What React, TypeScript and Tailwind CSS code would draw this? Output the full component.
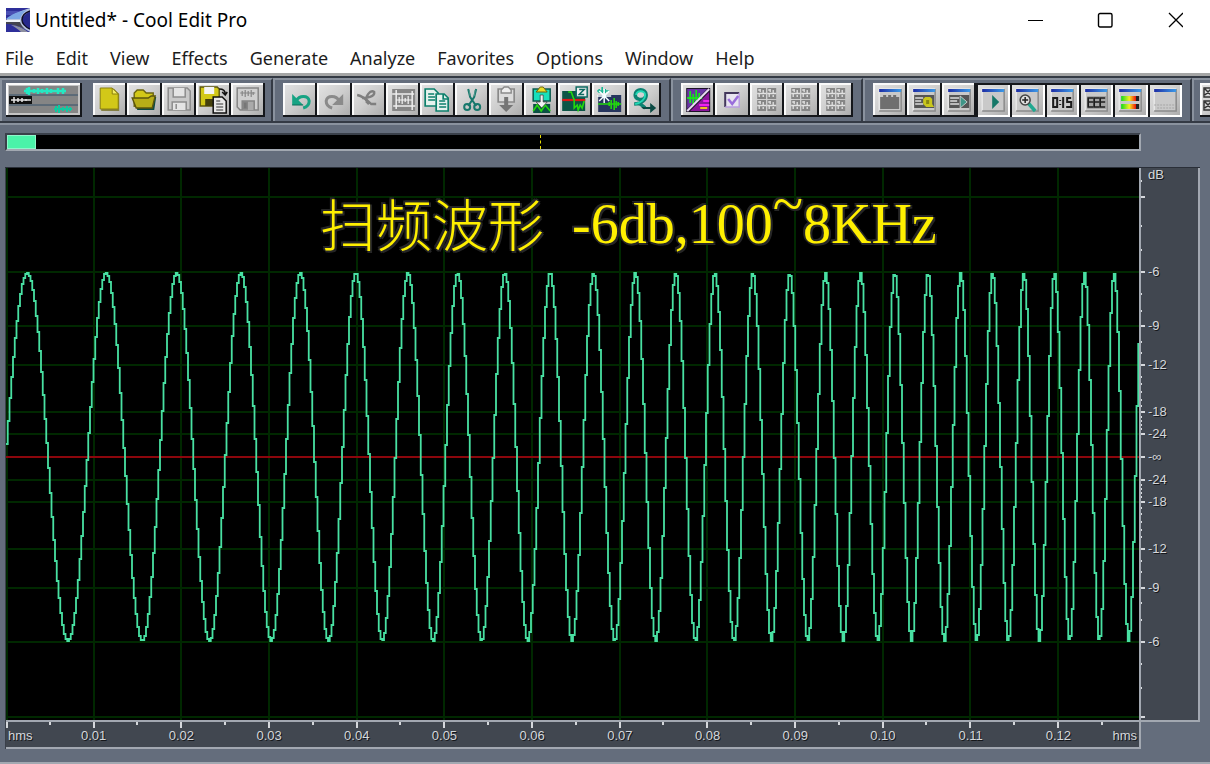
import React from "react";

const MENUS = ["File", "Edit", "View", "Effects", "Generate", "Analyze", "Favorites", "Options", "Window", "Help"];
const TIMES = ["0.01", "0.02", "0.03", "0.04", "0.05", "0.06", "0.07", "0.08", "0.09", "0.10", "0.11", "0.12"];

const PLOT_W = 1133;
const PLOT_H = 552;
const MID = 289;
const AMP = 184;
const STEP_X = 87.65;

const LEVELS = [
  { off: 23, label: "-24" },
  { off: 45, label: "-18" },
  { off: 92, label: "-12" },
  { off: 131, label: "-9" },
  { off: 185, label: "-6" },
  { off: 260, label: "" },
];
const MINOR = [28, 32, 36, 40, 51, 57, 65, 73, 80, 104, 115, 146, 163, 207, 231, 276];

function sweepPath() {
  const dx = 1.75;
  let d = "";
  for (let x = 0; x < PLOT_W; x += dx) {
    const t = x + 1;
    const cycles = 0.011405 * t + 0.000010263 * t * t;
    const y = Math.round(MID - AMP * Math.sin(2 * Math.PI * cycles));
    d += d === "" ? `M${x} ${y}` : `V${y}`;
    d += `H${x + dx}`;
  }
  return d;
}
const WAVE = sweepPath();

/* ---------- toolbar icons, drawn on a 34 x 34 face ---------- */

const NewIcon = (
  <g>
    <path d="M8 6h13l5 5v17H8z" fill="#6b6410" opacity=".7" />
    <path d="M7 5h12l6 6v15H7z" fill="#d2c818" stroke="#8a8010" />
    <path d="M19 5v6h6z" fill="#f4ec60" stroke="#8a8010" />
  </g>
);
const OpenIcon = (
  <g>
    <path d="M8 14h21l-2 13H10z" fill="#0d4a44" />
    <path d="M7 24V10l3-3h6l3 3h7v4" fill="#d2c818" stroke="#6b6410" strokeWidth="1.4" />
    <path d="M5 15h16l3-2h4l-3 12H9z" fill="#b8ae18" stroke="#5c560c" strokeWidth="1.4" />
  </g>
);
const SaveIcon = (
  <g fill="none" stroke="#8d8d8d" strokeWidth="1.5">
    <path d="M6 5h19l3 3v19H6z" fill="#c9c9c9" />
    <path d="M11 5v9h12V5M10 27v-8h14v8M14 21v5" fill="#e4e4e4" />
  </g>
);
const SaveAsIcon = (
  <g>
    <path d="M4 4h17l2 2v17H4z" fill="#d2c818" stroke="#5c560c" strokeWidth="1.4" />
    <path d="M8 4h10v7H8z" fill="#f4f4f4" />
    <path d="M9 16h9v7H9z" fill="#44400c" />
    <path d="M23 6c4 0 6 1 6 5M26 9l3 3 2-3" fill="none" stroke="#111" strokeWidth="1.6" />
    <path d="M17 14h9l4 4v12H17z" fill="#e8e8e8" stroke="#111" strokeWidth="1.5" />
    <path d="M20 18h4M20 21h7M20 24h7M20 27h7" stroke="#333" />
  </g>
);
const SaveSelIcon = (
  <g fill="none" stroke="#858585" strokeWidth="1.5">
    <path d="M6 5h21v22H9l-3-3z" fill="#cfcfcf" />
    <path d="M9 10h15M11 8v5M14 7v7M17 8v5M20 7v7M22 9v3" strokeWidth="1.2" />
    <path d="M11 27v-9h12v9" fill="#aaa" />
    <path d="M12 19h4v7h-4z" fill="#777" />
  </g>
);
const UndoIcon = (
  <g>
    <path d="M13 18c3-6 12-6 13 0 0 4-2 6-6 7" fill="none" stroke="#16a383" strokeWidth="3" />
    <path d="M9 11v11h11z" fill="#16a383" />
    <path d="M9 22h11" stroke="#0c6a58" />
  </g>
);
const RedoIcon = (
  <g>
    <path d="M22 18c-3-6-12-6-13 0 0 4 2 6 6 7" fill="none" stroke="#8a8a8a" strokeWidth="3" />
    <path d="M26 11v11H15z" fill="#8a8a8a" />
  </g>
);
const ToolIcon = (
  <g fill="none" stroke="#7f7f7f" strokeWidth="2.4">
    <path d="M5 12c5 1 9 4 14 9h5" />
    <path d="M10 15c4 0 13-1 12-6-4-3-9 5-8 9" />
    <path d="M14 18l3 3" strokeWidth="3" />
  </g>
);
const CropIcon = (
  <g>
    <path d="M6 6h23v22H6z" fill="#868686" />
    <path d="M10 7v19M26 8v19M6 11h22M7 23h22" stroke="#eee" strokeWidth="1.5" />
    <path d="M10 17h16M13 14v6M16 12v9M19 15v4M22 13v8" stroke="#f4f4f4" strokeWidth="1.2" />
  </g>
);
const CopyIcon = (
  <g stroke="#0c806c" strokeWidth="1.7" fill="#e6f3ee">
    <path d="M5 6h9l4 4v13H5z" />
    <path d="M8 11h6M8 14h7M8 17h7" />
    <path d="M16 11h8l4 4v13H16z" />
    <path d="M23 11v5h5M19 18h6M19 21h7M19 24h7" fill="none" />
  </g>
);
const CutIcon = (
  <g fill="none" stroke="#17786c" strokeWidth="2">
    <path d="M13 6l2 8 6 9M21 6l-2 8-6 9" />
    <circle cx="12" cy="24" r="3" />
    <circle cx="22" cy="24" r="3" />
    <path d="M14 7l1 6M20 7l-1 6" stroke="#50998e" strokeWidth="1" />
  </g>
);
const PasteIcon = (
  <g>
    <path d="M9 6h16v13H9z" fill="#dcdcdc" stroke="#8a8a8a" strokeWidth="1.7" />
    <path d="M12 10V7l3-3h4l3 3v3z" fill="#eee" stroke="#8a8a8a" strokeWidth="1.4" />
    <path d="M15 14h4v8h5l-7 7-7-7h5z" fill="#757575" />
  </g>
);
const MixPasteIcon = (
  <g>
    <path d="M9 6h17v12H9z" fill="#18e0bb" stroke="#0c5a4e" strokeWidth="1.5" />
    <path d="M12 9l4-5h3l4 5z" fill="#e9dd28" stroke="#6b6410" />
    <path d="M9 21h17v9H9z" fill="#0b5144" />
    <path d="M9 28l4-6 4 6 4-6 5 6" fill="none" stroke="#23d80e" strokeWidth="1.6" />
    <path d="M16 12h3v7h4l-5.500 6-5.500-6h4z" fill="#f2f2f2" stroke="#333" strokeWidth=".7" />
  </g>
);
const ZeroIcon = (
  <g>
    <path d="M4 8h23v20H4z" fill="#0c5546" />
    <path d="M4 17h23" stroke="#e01515" strokeWidth="2.200" />
    <path d="M10 9h3l3 8v8l3-3 1 5 2-5 2 3 2-7" fill="none" stroke="#23d80e" strokeWidth="1.600" />
    <path d="M18 4h11v10H18z" fill="#eee" stroke="#0c6a62" strokeWidth="1.5" />
    <path d="M21 6.500h5l-5 5h5" fill="none" stroke="#0c6a62" strokeWidth="1.500" />
  </g>
);
const NoiseIcon = (
  <g>
    <path d="M6 12h23v17H6z" fill="#26355e" />
    <path d="M6 21h23M17 19v4M19 17v9M22 15v12M24 18v7M26 19v4" stroke="#23d80e" strokeWidth="1.600" />
    <path d="M5 8h12M7 6v4M10 4v6M13 6v4" stroke="#16b893" strokeWidth="1.600" />
    <path d="M12 6v14M5 13h14M7 8l10 10M17 8L7 18" stroke="#f4ffff" strokeWidth="1.500" />
  </g>
);
const ConvertIcon = (
  <g>
    <path d="M7 21c8 0 12-5 12-9 0-7-11-7-11 0 0 5 8 6 10 2M9 21c4-2 6 2 9 4" fill="none" stroke="#0c8272" strokeWidth="3.500" />
    <path d="M8 21c6-1 10-5 10-9 0-5-9-5-9 0" fill="none" stroke="#22d8b5" strokeWidth="2" />
    <path d="M14 24h9v-4l6 5-6 5v-4h-7z" fill="#0b4a44" />
  </g>
);
const SpectralIcon = (
  <g>
    <path d="M5 5h24v24H5z" fill="#1c1226" />
    <path d="M6 6h20L6 26z" fill="#6a35a5" />
    <path d="M28 9v19H9z" fill="#8b159b" />
    <path d="M6 15h15M9 8v12M12 11v10M15 7v12M18 10v7" stroke="#18e41e" strokeWidth="1.800" />
    <path d="M6 28L28 6" stroke="#e8d9f4" strokeWidth="2" />
    <path d="M22 18h6M18 22h10" stroke="#ee22ee" strokeWidth="2" />
    <path d="M19 25h7" stroke="#f0c020" strokeWidth="2" />
  </g>
);
const CheckIcon = (
  <g>
    <path d="M10 10h14v14H10z" fill="#e8e4f0" />
    <path d="M10 24V10h14" fill="none" stroke="#43375c" strokeWidth="2" />
    <path d="M10 24h14V10" fill="none" stroke="#b99de0" strokeWidth="1.500" />
    <path d="M13 16l4 5 6-8" fill="none" stroke="#9a6ddb" strokeWidth="2.500" />
  </g>
);
const GridIcon = (
  <g>
    {[5, 17].map((y) =>
      [7, 17].map((x) => (
        <g key={`${x}-${y}`}>
          <path d={`M${x} ${y}h9v11h-9z`} fill="#868686" />
          <path
            d={`M${x} ${y + 5.5}h9M${x + 3} ${y + 1}v3M${x + 6} ${y + 2}v3M${x + 2} ${y + 6}v3M${x + 6} ${y + 7}v2M${x + 1} ${y + 2}h2`}
            stroke="#e2e2e2"
            strokeWidth="1.300"
          />
        </g>
      ))
    )}
    <path d="M16.500 4v25" stroke="#d4d4d4" />
  </g>
);
const QueueIcon = (
  <g>
    {[5, 18].map((y) => (
      <g key={y} fill="none" stroke="#333" strokeWidth="1.500">
        <path d={`M4 ${y}h8v9H4zM5 ${y + 1}l6 6M11 ${y + 1}l-6 6`} />
      </g>
    ))}
  </g>
);

function PanelIcon({ children }: { children?: React.ReactNode }) {
  return (
    <g>
      <path d="M6 6h22v22H6z" fill="#c9c9c9" />
      <path d="M6 28V6h22" fill="none" stroke="#f5f5f5" />
      <path d="M6 28h22V6" fill="none" stroke="#8b8b8b" strokeWidth="1.500" />
      <path d="M6 6h22v3H6z" fill="url(#titleBlue)" />
      {children}
    </g>
  );
}

const P1 = (
  <PanelIcon>
    <path d="M7 14h3v-2h3v2h2v-2h3v2h2v-2h3v2h3v12H7z" fill="#6f6f6f" />
  </PanelIcon>
);
const P2 = (
  <PanelIcon>
    <path d="M7 12h20v13H7z" fill="#555" />
    <path d="M8 15h8M8 18h6M8 21h8" stroke="#ddd" strokeWidth="1.500" />
    <path d="M18 14h5l2 2v5l2 3h-8l-3-3v-5z" fill="#c9c61c" />
    <path d="M19 17h3v4h-3z" fill="#888712" />
  </PanelIcon>
);
const P3 = (
  <PanelIcon>
    <path d="M7 12h20v13H7z" fill="#555" />
    <path d="M8 15h9M8 18h7M8 21h9" stroke="#ddd" strokeWidth="1.500" />
    <path d="M18 13l7 6-7 6z" fill="#3f9587" stroke="#ddd" strokeWidth=".8" />
  </PanelIcon>
);
const P4 = (
  <PanelIcon>
    <path d="M16 12l7 7-7 7z" fill="#157868" />
  </PanelIcon>
);
const P5 = (
  <PanelIcon>
    <path d="M18 20l7 8" stroke="#20a890" strokeWidth="3.500" />
    <circle cx="15" cy="17" r="5" fill="#ddd" stroke="#444" strokeWidth="1.500" />
    <path d="M12 17h6M15 14v6" stroke="#222" strokeWidth="1.500" />
  </PanelIcon>
);
const P6 = (
  <PanelIcon>
    <path d="M8 15h4v9H8zM15 17v1M15 21v1M18 14v11M26 15h-4v4h4v5h-5" fill="none" stroke="#1c1c1c" strokeWidth="2" />
  </PanelIcon>
);
const P7 = (
  <PanelIcon>
    <path d="M8 13h19v13H8z" fill="#a4a4a4" />
    <path d="M14 15H9v9h5M9 19h5M20 15h-5v9h5M15 19h5M26 15h-5v9h5M21 19h5" fill="none" stroke="#1d1d1d" strokeWidth="1.700" />
  </PanelIcon>
);
const P8 = (
  <PanelIcon>
    <path d="M8 13h18v5H8zM8 21h18v5H8z" fill="url(#meter)" />
  </PanelIcon>
);
const P9 = (
  <PanelIcon>
    <path d="M6 22h21M9 25h18" stroke="#a5a5a5" strokeDasharray="2 1" />
  </PanelIcon>
);

type Tool = { name: string; icon: React.ReactNode; on?: boolean };

const FILE_TOOLS: Tool[] = [
  { name: "New", icon: NewIcon },
  { name: "Open", icon: OpenIcon },
  { name: "Save", icon: SaveIcon },
  { name: "Save As", icon: SaveAsIcon },
  { name: "Save Selection", icon: SaveSelIcon },
];
const EDIT_TOOLS: Tool[] = [
  { name: "Undo", icon: UndoIcon },
  { name: "Redo", icon: RedoIcon },
  { name: "Repeat Last Command", icon: ToolIcon },
  { name: "Trim", icon: CropIcon },
  { name: "Copy", icon: CopyIcon },
  { name: "Cut", icon: CutIcon },
  { name: "Paste", icon: PasteIcon },
  { name: "Mix Paste", icon: MixPasteIcon },
  { name: "Adjust to Zero Crossing", icon: ZeroIcon },
  { name: "Noise Reduction", icon: NoiseIcon },
  { name: "Convert Sample Type", icon: ConvertIcon },
];
const VIEW_TOOLS: Tool[] = [
  { name: "Spectral View", icon: SpectralIcon },
  { name: "Settings", icon: CheckIcon },
  { name: "Cue List", icon: GridIcon },
  { name: "Play List", icon: GridIcon },
  { name: "Group List", icon: GridIcon },
];
const WINDOW_TOOLS: Tool[] = [
  { name: "Organizer", icon: P1 },
  { name: "Cue Window", icon: P2 },
  { name: "Play Window", icon: P3 },
  { name: "Transport", icon: P4, on: true },
  { name: "Zoom", icon: P5, on: true },
  { name: "Time", icon: P6, on: true },
  { name: "Selection", icon: P7, on: true },
  { name: "Level Meters", icon: P8, on: true },
  { name: "Status Bar", icon: P9, on: true },
];

function ToolButton({ tool }: { tool: Tool }) {
  const edge = tool.on
    ? "shadow-[inset_2px_2px_0_#15171b,inset_-2px_-2px_0_#ffffff]"
    : "shadow-[inset_-2px_-2px_0_#15171b,inset_2px_2px_0_#fafafa]";
  return (
    <button
      type="button"
      aria-label={tool.name}
      aria-pressed={tool.on}
      className={`h-[34px] min-w-0 flex-1 bg-linear-to-br from-[#e4e4e4] via-[#cdcdcd] to-[#a9a9a9] ${edge}`}
    >
      <svg viewBox="0 0 34 34" className="h-full w-full">{tool.icon}</svg>
    </button>
  );
}

function Group({ width, pad = "px-2", tools, children }: { width: string; pad?: string; tools: Tool[]; children?: React.ReactNode }) {
  return (
    <div className={`flex shrink-0 border-t-2 border-r-2 border-l-2 border-t-[#8a929e] border-r-[#343a44] border-l-[#8a929e] pt-[3px] ${pad}`}>
      {children}
      <div className={`flex ${width}`}>
        {tools.map((t) => (
          <ToolButton key={t.name} tool={t} />
        ))}
      </div>
    </div>
  );
}

function MultitrackButton() {
  return (
    <button
      type="button"
      aria-label="Switch to Multitrack View"
      className="mr-[11px] h-[34px] w-[76px] bg-[#c4c4c4] shadow-[inset_-2px_-2px_0_#15171b,inset_2px_2px_0_#fafafa]"
    >
      <svg viewBox="0 0 76 34" className="h-full w-full">
        <path d="M3 3h69v27H3z" fill="#858585" />
        <path d="M3 12h69M3 22h69" stroke="#34506b" />
        <path d="M3 13h23v8H3z" fill="#111" />
        <path d="M18 8h42M21 5v6M23 4v8M28 6v4M32 5v6M36 6v4M41 5v6M45 6v4M52 5v6M57 5v6" stroke="#25e8c2" strokeWidth="2.500" />
        <path d="M5 17h20M8 14v6M12 15v4M16 15v4M20 16v2" stroke="#e4e4e4" strokeWidth="1.500" />
        <path d="M48 26h18M50 23v6M53 22v8M57 24v4M61 23v6M64 24v4" stroke="#10c9a0" strokeWidth="2" />
      </svg>
    </button>
  );
}

const majorYs = LEVELS.flatMap((l) => [MID - l.off, MID + l.off]);

function Plot() {
  return (
    <svg viewBox={`0 0 ${PLOT_W} ${PLOT_H}`} preserveAspectRatio="none" className="block h-[552px] w-full bg-black">
      <g stroke="#002800" strokeWidth="2" shapeRendering="crispEdges">
        <path d={`M1 0V${PLOT_H}`} />
        {TIMES.map((t, i) => (
          <path key={t} d={`M${Math.round((i + 1) * STEP_X)} 0V${PLOT_H}`} />
        ))}
        {majorYs.map((y) => (
          <path key={y} d={`M0 ${y}H${PLOT_W}`} />
        ))}
      </g>
      <rect x="0" y={MID - 1} width={PLOT_W} height="2" fill="#8c060c" />
      <path d={WAVE} fill="none" stroke="#48e0a2" strokeWidth="1.800" />
    </svg>
  );
}

function LevelAxis() {
  return (
    <svg
      viewBox="0 0 57 552"
      className="block h-[552px] w-[57px] bg-[#414750] font-['Liberation_Sans',sans-serif] text-[13px] [text-shadow:1px_1px_0_#15171b]"
      fill="#d5d8dc"
    >
      <text x="7" y="11">dB</text>
      {majorYs.map((y) => (
        <path key={y} d={`M0 ${y - 1}h4v2h-4z`} />
      ))}
      {MINOR.flatMap((m) => [MID - m, MID + m]).map((y) => (
        <path key={y} d={`M0 ${y - 1}h1v2h-1z`} />
      ))}
      <path d={`M0 ${MID - 1}h4v2h-4z`} />
      <text x="7" y={MID + 4}>-∞</text>
      {LEVELS.filter((l) => l.label).map((l) => (
        <React.Fragment key={l.label}>
          <text x="7" y={MID - l.off + 4}>{l.label}</text>
          <text x="7" y={MID + l.off + 4}>{l.label}</text>
        </React.Fragment>
      ))}
    </svg>
  );
}

function TimeAxis() {
  return (
    <div className="border-t-2 border-b-2 border-[#a2a8b1] bg-[#414750]">
      <svg viewBox={`0 0 ${PLOT_W} 6`} preserveAspectRatio="none" className="block h-[6px] w-full" shapeRendering="crispEdges">
        {Array.from({ length: 26 }, (_, i) => (
          <path key={i} d={`M${Math.max(0, Math.round((i * STEP_X) / 2) - 1)} 0h2v${i % 2 ? 3 : 6}h-2z`} fill="#d5d8dc" />
        ))}
      </svg>
      <div className="grid h-[19px] grid-cols-[0.5fr_repeat(12,minmax(0,1fr))_0.42fr] text-center font-['Liberation_Sans',sans-serif] text-[13px] leading-[15px] text-[#d5d8dc] [text-shadow:1px_1px_0_#15171b]">
        <span className="pl-0.5 text-left">hms</span>
        {TIMES.map((t) => (
          <span key={t}>{t}</span>
        ))}
        <span className="pr-0.5 text-right">hms</span>
      </div>
    </div>
  );
}

function TitleBar() {
  return (
    <header className="flex h-10 items-center bg-white pl-1.5">
      <svg viewBox="0 0 24 24" className="h-6 w-6" aria-hidden="true">
        <path d="M0 0h24v24H0z" fill="#2e2f9a" />
        <path d="M0 3h24v4H0z" fill="#4a50b4" />
        <path d="M24 0C18 2 8 5 0 12v3c8 0 16 4 24 9v-3c-6-3-8-6-8-9s3-6 8-9z" fill="#b7c4de" />
        <path d="M21 2C14 3 5 6 0 11h14c1-4 4-7 7-9z" fill="#7ba6e4" />
        <path d="M0 12h14v2H0z" fill="#f0f3f8" />
        <path d="M0 14h14c1 3 3 5 5 7C13 18 7 16 0 16z" fill="#44444f" />
        <path d="M5 17c5 0 12 3 17 7h-7c-3-3-6-5-10-7z" fill="#8d8fa0" />
        <path d="M24 4c-5 2-7 5-7 8s3 6 7 8z" fill="#26298c" />
        <path d="M24 3c-6 2-8 6-8 9s3 7 8 9" fill="none" stroke="#0e0e26" strokeWidth="1.500" />
      </svg>
      <h1 className="flex-1 pl-[5px] text-[19px] text-black">Untitled* - Cool Edit Pro</h1>
      <div className="flex">
        <button type="button" aria-label="Minimize" className="flex h-10 w-[70px] items-center justify-center">
          <svg viewBox="0 0 16 16" className="h-4 w-4"><path d="M1 8.500h15" stroke="#000" /></svg>
        </button>
        <button type="button" aria-label="Maximize" className="flex h-10 w-[70px] items-center justify-center">
          <svg viewBox="0 0 16 16" className="h-4 w-4"><rect x="1.500" y="1.500" width="13.500" height="13.500" rx="1.500" fill="none" stroke="#000" strokeWidth="1.400" /></svg>
        </button>
        <button type="button" aria-label="Close" className="flex h-10 w-[70px] items-center justify-center">
          <svg viewBox="0 0 16 16" className="h-4 w-4"><path d="M2 1l14 14M16 1L2 15" stroke="#000" strokeWidth="1.300" /></svg>
        </button>
      </div>
    </header>
  );
}

export default function App() {
  return (
    <div className="flex min-h-screen flex-col overflow-hidden bg-[#646d7c] font-['Noto_Sans','Noto_Sans_CJK_SC',sans-serif]">
      <svg className="absolute h-0 w-0" aria-hidden="true">
        <defs>
          <linearGradient id="titleBlue">
            <stop offset="0" stopColor="#1c2ca4" />
            <stop offset="1" stopColor="#3d9ae8" />
          </linearGradient>
          <linearGradient id="meter">
            <stop offset="0" stopColor="#10d820" />
            <stop offset=".45" stopColor="#f4f020" />
            <stop offset=".8" stopColor="#ee2010" />
            <stop offset=".81" stopColor="#222" />
          </linearGradient>
        </defs>
      </svg>
      <TitleBar />
      <nav className="flex h-[33px] items-center gap-[22px] bg-white pt-1 pl-[5px] text-[18px] text-[#1c1c1c]">
        {MENUS.map((m) => (
          <button key={m} type="button">{m}</button>
        ))}
      </nav>

      <div className="flex h-[52px] overflow-hidden border-t-[3px] border-b-2 border-t-[#a5a6a6] border-b-[#8a929e]">
        <div className="flex border-t-2 border-b-2 border-[#343a44]">
          <Group width="w-[172px]" pad="pl-1 pr-1.5" tools={FILE_TOOLS}>
            <MultitrackButton />
          </Group>
          <Group width="w-[378px]" tools={EDIT_TOOLS} />
          <Group width="w-[172px]" tools={VIEW_TOOLS} />
          <Group width="w-[309px]" tools={WINDOW_TOOLS} />
          <Group width="w-[34px]" pad="px-1.5" tools={[{ name: "Session", icon: QueueIcon }]} />
        </div>
      </div>

      <main className="flex-1 pr-[10px] pl-[5px]">
        <div className="mt-2 mr-[59px] h-[18px] border-2 border-t-[#3a404a] border-r-[#a2a8b1] border-b-[#a2a8b1] border-l-[#3a404a] bg-black">
          <div className="grid h-full grid-cols-[29px_505px_1fr]">
            <div className="border border-[#8ff7cc] bg-[#4bf3a9]" />
            <div className="border-r border-dashed border-[#e8dc00]" />
          </div>
        </div>

        <section className="mt-4 flex border-t border-[#2a2f38]" aria-label="Waveform display">
          <div className="relative min-w-0 flex-1 border-r-2 border-l border-r-[#a2a8b1] border-l-[#3a404a]">
            <Plot />
            <TimeAxis />
            <p className="absolute top-4 left-[314px] flex items-start gap-7 text-[56px] leading-[76px] whitespace-nowrap text-[#fff000] [text-shadow:2px_0_0_#262626,-2px_0_0_#262626,0_2px_0_#262626,0_-2px_0_#262626,2px_2px_0_#262626,-2px_-2px_0_#262626]">
              <span className="font-['Noto_Sans_CJK_SC',sans-serif] font-light">扫频波形</span>
              <span className="font-['Liberation_Serif',serif] leading-[48px]">
                -6db,100<span className="align-[20px] leading-[40px]">~</span>8KHz
              </span>
            </p>
          </div>
          <div className="self-start border-r-2 border-b-2 border-[#a2a8b1]">
            <LevelAxis />
          </div>
        </section>
      </main>
      <footer className="h-0.5 bg-[#a2a8b1]" />
    </div>
  );
}
